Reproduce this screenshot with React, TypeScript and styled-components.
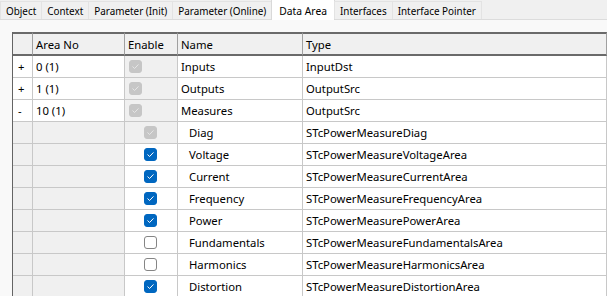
import React from 'react'
import styled, { createGlobalStyle } from 'styled-components';

const GlobalStyle = createGlobalStyle`
  html, body {
    margin: 0;
    padding: 0;
    background: #f9f9f9;
  }
  body {
    font-family: "Noto Sans", "Open Sans", sans-serif;
    color: #000;
  }
`;

type CheckState = 'disabled' | 'checked' | 'unchecked';

interface AreaRow {
  expander: string;
  area: string;
  enable: CheckState;
  name: string;
  type: string;
  child: boolean;
}

const TABS = [
  'Object',
  'Context',
  'Parameter (Init)',
  'Parameter (Online)',
  'Data Area',
  'Interfaces',
  'Interface Pointer',
];
const ACTIVE_TAB = 'Data Area';

const ROWS: AreaRow[] = [
  { expander: '+', area: '0 (1)', enable: 'disabled', name: 'Inputs', type: 'InputDst', child: false },
  { expander: '+', area: '1 (1)', enable: 'disabled', name: 'Outputs', type: 'OutputSrc', child: false },
  { expander: '-', area: '10 (1)', enable: 'disabled', name: 'Measures', type: 'OutputSrc', child: false },
  { expander: '', area: '', enable: 'disabled', name: 'Diag', type: 'STcPowerMeasureDiag', child: true },
  { expander: '', area: '', enable: 'checked', name: 'Voltage', type: 'STcPowerMeasureVoltageArea', child: true },
  { expander: '', area: '', enable: 'checked', name: 'Current', type: 'STcPowerMeasureCurrentArea', child: true },
  { expander: '', area: '', enable: 'checked', name: 'Frequency', type: 'STcPowerMeasureFrequencyArea', child: true },
  { expander: '', area: '', enable: 'checked', name: 'Power', type: 'STcPowerMeasurePowerArea', child: true },
  { expander: '', area: '', enable: 'unchecked', name: 'Fundamentals', type: 'STcPowerMeasureFundamentalsArea', child: true },
  { expander: '', area: '', enable: 'unchecked', name: 'Harmonics', type: 'STcPowerMeasureHarmonicsArea', child: true },
  { expander: '', area: '', enable: 'checked', name: 'Distortion', type: 'STcPowerMeasureDistortionArea', child: true },
];

const Window = styled.div`
  width: 607px;
  height: 296px;
  overflow: hidden;
  display: flex;
  flex-direction: column;
`;

const TabStrip = styled.div`
  height: 20px;
  display: flex;
  align-items: flex-end;
  background: #f0f0f0;
  border-bottom: 1px solid #dcdcdc;
  box-sizing: border-box;
`;

const Tab = styled.div<{ $active: boolean }>`
  box-sizing: border-box;
  height: ${({ $active }) => ($active ? '21px' : '18px')};
  margin-bottom: ${({ $active }) => ($active ? '-1px' : '0')};
  padding: ${({ $active }) => ($active ? '1px 7px 0' : '0 5px')};
  display: flex;
  align-items: center;
  font-size: ${({ $active }) => ($active ? '10.3px' : '9.9px')};
  white-space: nowrap;
  background: ${({ $active }) => ($active ? '#ffffff' : '#f0f0f0')};
  border: 1px solid ${({ $active }) => ($active ? '#d9d9d9' : '#e3e3e3')};
  border-bottom: none;
  margin-right: -1px;
`;

const Panel = styled.div`
  flex: 1;
  padding: 12px 0 0 12px;
`;

const Grid = styled.div`
  display: grid;
  grid-template-columns: 20px 92px 53px 125px 1fr;
  border-left: 1px solid #646464;
  font-size: 11.3px;
`;

const HeaderCell = styled.div`
  height: 24px;
  box-sizing: border-box;
  display: flex;
  align-items: center;
  padding: 0 3px;
  background: #f0f0f0;
  border-top: 2px solid #6a6a6a;
  border-bottom: 2px solid #6a6a6a;
  border-right: 1px solid #a0a0a0;
`;

const Cell = styled.div<{ $shade?: boolean; $indent?: number }>`
  height: 22px;
  box-sizing: border-box;
  display: flex;
  align-items: center;
  padding: 0 3px 0 ${({ $indent }) => 3 + ($indent ?? 0)}px;
  white-space: nowrap;
  background: ${({ $shade }) => ($shade ? '#f0f0f0' : '#ffffff')};
  border-right: 1px solid #c8c8c8;
  border-bottom: 1px solid #c8c8c8;
`;

const ExpanderCell = styled(Cell)`
  padding-left: 5px;
`;

const Box = styled.span<{ $state: CheckState }>`
  width: 13px;
  height: 13px;
  box-sizing: border-box;
  border-radius: 3px;
  display: inline-flex;
  align-items: center;
  justify-content: center;
  background: ${({ $state }) =>
    $state === 'checked' ? '#0067c0' : $state === 'disabled' ? '#c6c6c6' : '#ffffff'};
  border: 1px solid ${({ $state }) =>
    $state === 'checked' ? '#0067c0' : $state === 'disabled' ? '#c6c6c6' : '#858585'};
`;

const CheckBox = ({ state }: { state: CheckState }) => (
  <Box $state={state}>
    {state !== 'unchecked' && (
      <svg width="9" height="9" viewBox="0 0 9 9">
        <path
          d="M1.8 4.8 L3.6 6.5 L7.2 2.7"
          fill="none"
          stroke={state === 'checked' ? '#ffffff' : '#e6e6e6'}
          strokeWidth="1"
          strokeLinecap="round"
          strokeLinejoin="round"
        />
      </svg>
    )}
  </Box>
);

const App = () => (
  <Window>
    <GlobalStyle />
    <TabStrip>
      {TABS.map((t) => (
        <Tab key={t} $active={t === ACTIVE_TAB}>{t}</Tab>
      ))}
    </TabStrip>
    <Panel>
      <Grid>
        <HeaderCell />
        <HeaderCell>Area No</HeaderCell>
        <HeaderCell>Enable</HeaderCell>
        <HeaderCell>Name</HeaderCell>
        <HeaderCell>Type</HeaderCell>
        {ROWS.map((r, i) => (
          <React.Fragment key={i}>
            <ExpanderCell $shade={r.child}>{r.expander}</ExpanderCell>
            <Cell $shade={r.child}>{r.area}</Cell>
            <Cell $shade={r.enable === 'disabled'} $indent={r.child ? 16 : 1}>
              <CheckBox state={r.enable} />
            </Cell>
            <Cell $indent={r.child ? 8 : 0}>{r.name}</Cell>
            <Cell>{r.type}</Cell>
          </React.Fragment>
        ))}
      </Grid>
    </Panel>
  </Window>
);

export default App
